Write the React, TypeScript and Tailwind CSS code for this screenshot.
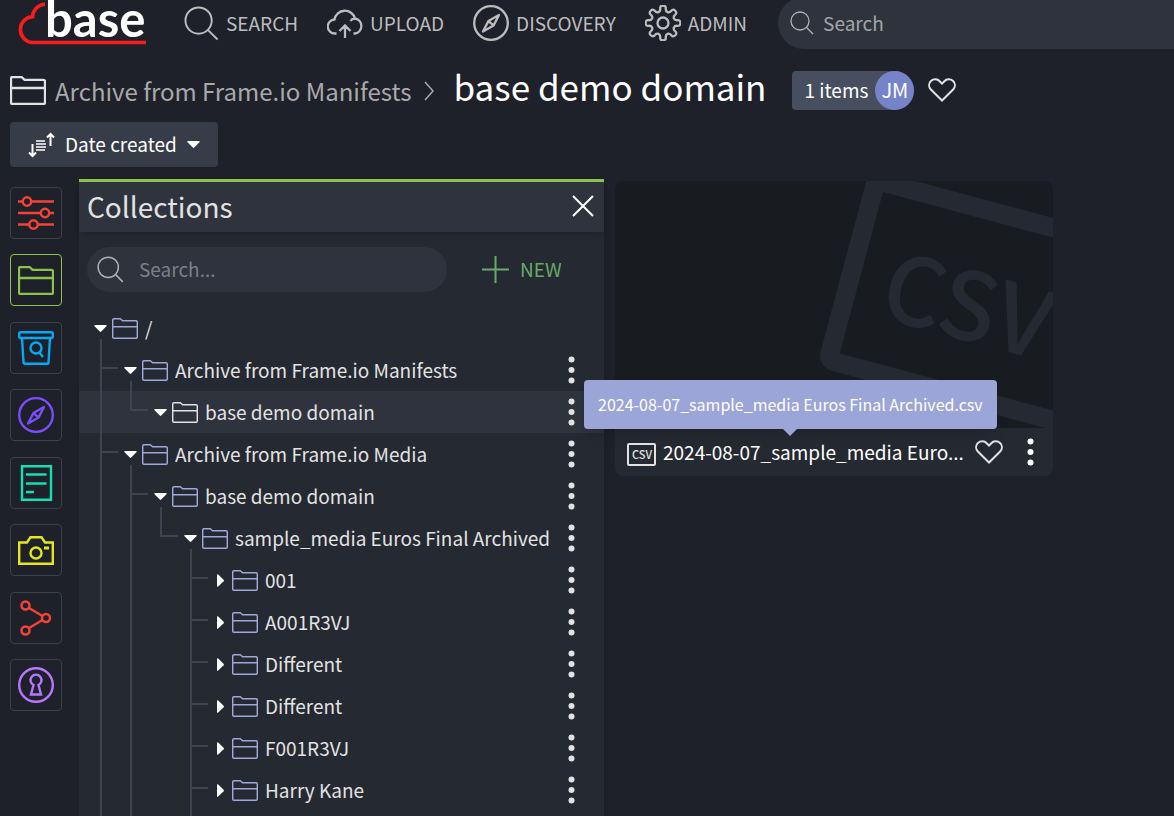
import { ReactElement, ReactNode, useState } from "react";

type Guide = "line" | "tee" | "elbow" | "blank";

interface TreeRow {
  name: string;
  guides: Guide[];
  open?: boolean;
  stub?: boolean;
  selected?: boolean;
  root?: boolean;
}

const rows: TreeRow[] = [
  { name: "/", guides: [], open: true, stub: true, root: true },
  {
    name: "Archive from Frame.io Manifests",
    guides: ["tee"],
    open: true,
    stub: true,
  },
  {
    name: "base demo domain",
    guides: ["line", "elbow"],
    open: true,
    selected: true,
  },
  {
    name: "Archive from Frame.io Media",
    guides: ["tee"],
    open: true,
    stub: true,
  },
  {
    name: "base demo domain",
    guides: ["line", "tee"],
    open: true,
    stub: true,
  },
  {
    name: "sample_media Euros Final Archived",
    guides: ["line", "line", "elbow"],
    open: true,
    stub: true,
  },
  { name: "001", guides: ["line", "line", "blank", "tee"] },
  { name: "A001R3VJ", guides: ["line", "line", "blank", "tee"] },
  { name: "Different", guides: ["line", "line", "blank", "tee"] },
  { name: "Different", guides: ["line", "line", "blank", "tee"] },
  { name: "F001R3VJ", guides: ["line", "line", "blank", "tee"] },
  { name: "Harry Kane", guides: ["line", "line", "blank", "tee"] },
];

const FILE_NAME = "2024-08-07_sample_media Euros Final Archived.csv";
const MAX_NAME = 28;

const shorten = (name: string): string =>
  name.length > MAX_NAME ? name.slice(0, MAX_NAME) + "..." : name;

// Eight rounded teeth, smoothed through the midpoints of the outline.
const gearPath = (): string => {
  const pts: [number, number][] = [];
  for (let i = 0; i < 8; i++) {
    const steps: [number, number][] = [
      [-10, 17.6],
      [10, 17.6],
      [12, 12],
      [33, 12],
    ];
    steps.forEach(([deg, r]) => {
      const a = ((i * 45 + deg) * Math.PI) / 180;
      pts.push([18 + r * Math.cos(a), 18 + r * Math.sin(a)]);
    });
  }
  const mid = (i: number) => {
    const [x1, y1] = pts[i % pts.length];
    const [x2, y2] = pts[(i + 1) % pts.length];
    return `${(x1 + x2) / 2} ${(y1 + y2) / 2}`;
  };
  let d = `M${mid(0)}`;
  for (let i = 1; i <= pts.length; i++) {
    const [x, y] = pts[i % pts.length];
    d += ` Q${x} ${y} ${mid(i)}`;
  }
  return d + "Z";
};

const Icon = (props: {
  box: string;
  className: string;
  width?: number;
  children: ReactNode;
}): ReactElement => (
  <svg
    viewBox={props.box}
    className={`shrink-0 ${props.className}`}
    fill="none"
    stroke="currentColor"
    strokeWidth={props.width ?? 2}
    aria-hidden="true"
  >
    {props.children}
  </svg>
);

const Folder = ({ className, width }: { className: string; width?: number }) => (
  <Icon box="0 0 36 29" className={className} width={width}>
    <path
      d="M1 2.6Q1 1 2.6 1H11.6L14.6 3.8H33.4Q35 3.8 35 5.4V26.4Q35 28 33.4 28H2.6Q1 28 1 26.4ZM1 12H35"
      strokeLinejoin="round"
    />
  </Icon>
);

const Magnifier = ({ className }: { className: string }) => (
  <Icon box="0 0 36 36" className={className}>
    <circle cx="15" cy="15" r="13.5" />
    <path d="M24.5 24.5L34.5 34.5" />
  </Icon>
);

const Compass = ({ className }: { className: string }) => (
  <Icon box="0 0 36 36" className={className} width={2.3}>
    <circle cx="18" cy="18" r="16.8" />
    <path
      d="M26 10L20.6 20.4L10 26.5L15.4 16.1ZM15.4 16.1L20.6 20.4"
      strokeLinejoin="round"
    />
  </Icon>
);

const Heart = () => (
  <Icon box="0 0 28 24" className="h-6 w-7">
    <path d="M14 22.5L2.9 11.5C.4 8.8.6 5.2 2.9 3 5.6.5 9.5.8 11.7 3.2L14 5.6 16.3 3.2C18.5.8 22.4.5 25.1 3 27.4 5.2 27.6 8.8 25.1 11.5Z" />
  </Icon>
);

const Dots = () => (
  <svg viewBox="0 0 8 28" className="h-7 w-2" fill="currentColor">
    <circle cx="4.5" cy="3.5" r="3" />
    <circle cx="4.5" cy="14" r="3" />
    <circle cx="4.5" cy="24.5" r="3" />
  </svg>
);

const CaretDown = () => (
  <svg viewBox="0 0 13 7" className="h-[7px] w-[13px] shrink-0" fill="white">
    <path d="M1 0H12Q13.5 0 12.4 1.2L7.2 6.6Q6.5 7.2 5.8 6.6L.6 1.2Q-.5 0 1 0Z" />
  </svg>
);

const CaretRight = () => (
  <svg viewBox="0 0 7 13" className="h-[13px] w-[7px] shrink-0" fill="white">
    <path d="M0 1V12Q0 13.5 1.2 12.4L6.6 7.2Q7.2 6.5 6.6 5.8L1.2.6Q0-.5 0 1Z" />
  </svg>
);

const Logo = () => (
  <svg
    viewBox="0 0 130 46"
    className="h-[46px] w-[130px]"
    role="img"
    aria-label="base"
  >
    <path
      d="M28 4.3A13 13 0 0 0 15.6 16.6A13 13 0 0 0 15 42.5H129"
      fill="none"
      stroke="#f81c1c"
      strokeWidth="3.6"
    />
    <text
      x="28"
      y="37"
      fill="white"
      className="font-[Lato,sans-serif] text-[49px] font-bold"
    >
      base
    </text>
  </svg>
);

const navItems = [
  { label: "SEARCH", icon: <Magnifier className="size-[35px]" /> },
  {
    label: "UPLOAD",
    icon: (
      <Icon box="0 0 36 30" className="h-[30px] w-9" width={2.3}>
        <path d="M9.5 25.5H8A7 7 0 0 1 7.5 11.5A10.5 10.5 0 0 1 28 10.5A7.6 7.6 0 0 1 28 25.5H26.5M28 10.5Q25 10.6 23.5 13M18 30V18M12.5 23L18 17.5L23.5 23" />
      </Icon>
    ),
  },
  { label: "DISCOVERY", icon: <Compass className="size-9" /> },
  {
    label: "ADMIN",
    icon: (
      <Icon box="0 0 36 36" className="size-9" width={2.3}>
        <path d={gearPath()} />
        <circle cx="18" cy="18" r="5.5" />
      </Icon>
    ),
  },
];

const tools = [
  {
    label: "Filters",
    color: "border-[#3b404e] text-[#f44336]",
    icon: (
      <Icon box="0 0 36 34" className="h-[34px] w-9" width={2.5}>
        <path d="M0 5.5H5M13 5.5H36M0 17H23M31 17H36M0 28.5H11M19 28.5H36" />
        <circle cx="9" cy="5.5" r="4.2" />
        <circle cx="27" cy="17" r="4.2" />
        <circle cx="15.5" cy="28.5" r="4.2" />
      </Icon>
    ),
  },
  {
    label: "Collections",
    color: "border-[#8bc34a] text-[#8bc34a]",
    icon: <Folder className="h-[29px] w-9" width={2.3} />,
  },
  {
    label: "Saved searches",
    color: "border-[#3b404e] text-[#03a9f4]",
    icon: (
      <Icon box="0 0 36 34" className="h-[34px] w-9" width={2.4}>
        <rect x="1.2" y="1.2" width="33.6" height="5.8" rx="1.5" />
        <path d="M4 7L5.5 31.3Q5.6 32.8 7 32.8H29Q30.4 32.8 30.5 31.3L32 7" />
        <circle cx="18" cy="17" r="5.5" />
        <path d="M21 21L25 26" />
      </Icon>
    ),
  },
  {
    label: "Discovery",
    color: "border-[#3b404e] text-[#7c4dff]",
    icon: <Compass className="size-9" />,
  },
  {
    label: "Notes",
    color: "border-[#3b404e] text-[#12dfb4]",
    icon: (
      <Icon box="0 0 36 36" className="size-9" width={2.4}>
        <path d="M4 1.2H33V34.8H4ZM8 9.5H28.5M8 18.5H28.5M8 27H16" />
      </Icon>
    ),
  },
  {
    label: "Snapshots",
    color: "border-[#3b404e] text-[#e6e61c]",
    icon: (
      <Icon box="0 0 36 29" className="h-[29px] w-9" width={2.4}>
        <path d="M1.2 6.5H9L12.5 1.2H23.5L27 6.5H34.8V27.8H1.2Z" />
        <circle cx="18" cy="17" r="5.5" />
        <path d="M26 12H31" strokeWidth="3" />
      </Icon>
    ),
  },
  {
    label: "Workflows",
    color: "border-[#3b404e] text-[#f44336]",
    icon: (
      <Icon box="0 0 36 36" className="size-9" width={2.5}>
        <circle cx="7.5" cy="5.5" r="4" />
        <circle cx="28" cy="18" r="4" />
        <circle cx="7.5" cy="30.5" r="4" />
        <path d="M11 8L24.5 16M11 28L24.5 20" />
      </Icon>
    ),
  },
  {
    label: "Permissions",
    color: "border-[#3b404e] text-[#b975ff]",
    icon: (
      <Icon box="0 0 36 36" className="size-9" width={2.4}>
        <circle cx="18" cy="18" r="16.8" />
        <path d="M15.5 18A5.5 5.5 0 1 1 20.5 18L23 27.5H13Z" />
      </Icon>
    ),
  },
];

const GuideCell = ({ kind }: { kind: Guide }) => (
  <div className="flex w-[30px] shrink-0 self-stretch pl-1.5">
    {kind !== "blank" && (
      <div
        className={`w-0.5 bg-[#3f4453] ${kind === "elbow" ? "h-5" : "h-full"}`}
      />
    )}
    {(kind === "tee" || kind === "elbow") && (
      <div className="mt-[18px] h-0.5 w-4 bg-[#3f4453]" />
    )}
  </div>
);

const TreeItem = ({ row }: { row: TreeRow }) => (
  <li
    className={`flex h-[42px] shrink-0 items-center pr-[29px] pl-[15px] ${
      row.selected ? "bg-[#2f333e]" : ""
    }`}
  >
    {row.guides.map((kind, i) => (
      <GuideCell key={i} kind={kind} />
    ))}
    <div className="mr-[5px] grid w-[13px] shrink-0 grid-rows-[1fr_auto_1fr] justify-items-center self-stretch">
      <span />
      {row.open ? <CaretDown /> : <CaretRight />}
      {row.stub && <span className="mt-[7px] w-0.5 bg-[#3f4453]" />}
    </div>
    <Folder
      className={`h-[21px] w-[26px] ${
        row.selected ? "text-[#e2e2e2]" : "text-[#9fa8da]"
      }`}
    />
    <span className="ml-[7px] flex-1 truncate text-[19px] leading-7">
      {row.name}
    </span>
    {!row.root && (
      <button type="button" aria-label={`Options for ${row.name}`}>
        <Dots />
      </button>
    )}
  </li>
);

const CollectionsPanel = () => {
  const [search, setSearch] = useState<string>("");
  return (
    <section className="flex w-[525px] shrink-0 flex-col border-t-[3px] border-[#8bc34a] bg-[#252931] shadow-md">
      <div className="flex h-[50px] shrink-0 items-center justify-between bg-[#2f333e] pr-2.5 pb-0.5 pl-2 shadow-md">
        <h2 className="text-[28px] leading-10">Collections</h2>
        <button type="button" aria-label="Close" className="text-white">
          <Icon box="0 0 22 22" className="size-[22px]">
            <path d="M1 1L21 21M21 1L1 21" />
          </Icon>
        </button>
      </div>
      <div className="mt-[15px] mb-[15px] flex items-center pl-2">
        <label className="flex h-[45px] w-[360px] items-center rounded-full bg-[#2f333e] pl-2.5 text-[#b0b0b2]">
          <Magnifier className="size-[27px]" />
          <input
            type="text"
            aria-label="Search collections"
            placeholder="Search..."
            value={search}
            onChange={(e) => setSearch(e.target.value)}
            className="ml-[15px] w-64 text-[19px] outline-none placeholder:text-[#7d7f86]"
          />
        </label>
        <button
          type="button"
          className="ml-[35px] flex items-center gap-[11px] text-[19px] text-[#66ab68]"
        >
          <Icon box="0 0 27 27" className="size-[27px]">
            <path d="M13.5 0V27M0 13.5H27" />
          </Icon>
          NEW
        </button>
      </div>
      <ul className="flex flex-col">
        {rows.map((row, i) => (
          <TreeItem key={i} row={row} />
        ))}
      </ul>
      <div className="flex flex-1 pl-[15px]">
        <GuideCell kind="line" />
        <GuideCell kind="line" />
        <GuideCell kind="blank" />
        <GuideCell kind="line" />
      </div>
    </section>
  );
};

const AssetCard = () => (
  <article className="w-[438px] rounded-lg bg-[#252931]">
    <svg
      viewBox="0 0 438 247"
      className="w-full rounded-t-lg bg-[#181b20]"
      aria-hidden="true"
    >
      <g transform="translate(268 11) rotate(15)">
        <rect
          x="-9.5"
          y="-9.5"
          width="250"
          height="186"
          rx="6"
          fill="none"
          stroke="#252931"
          strokeWidth="19"
        />
        <text x="26" y="122" fill="#252931" className="text-[94px] font-medium">
          CSV
        </text>
      </g>
    </svg>
    <div className="relative flex h-12 items-center pl-3">
      <svg
        viewBox="0 0 29 28"
        className="h-7 w-[29px] shrink-0"
        aria-hidden="true"
      >
        <rect
          x="1"
          y="6"
          width="27"
          height="21"
          rx="1"
          fill="none"
          stroke="#e2e2e2"
          strokeWidth="2"
        />
        <text x="5" y="21" fill="#e2e2e2" className="text-[11px] font-medium">
          CSV
        </text>
      </svg>
      <a
        href="#file"
        className="ml-[7px] w-[304px] text-[19px] leading-7 whitespace-nowrap text-white"
      >
        {shorten(FILE_NAME)}
      </a>
      <button type="button" aria-label="Add to favourites" className="ml-2">
        <Heart />
      </button>
      <button
        type="button"
        aria-label="File options"
        className="ml-[23px] text-white"
      >
        <Dots />
      </button>
      <div
        role="tooltip"
        className="absolute bottom-[47px] -left-[31px] z-10 flex flex-col items-center"
      >
        <div className="flex h-[49px] items-center rounded bg-[#9ca5d8] px-3.5 pb-0.5 text-[16px] whitespace-nowrap text-white shadow-lg">
          {FILE_NAME}
        </div>
        <svg
          viewBox="0 0 14 7"
          className="-mb-[7px] h-[7px] w-3.5"
          fill="#9ca5d8"
        >
          <path d="M0 0H14L7 7Z" />
        </svg>
      </div>
    </div>
  </article>
);

const App = (): ReactElement => {
  const [query, setQuery] = useState<string>("");

  return (
    <div className="flex h-screen flex-col overflow-hidden bg-[#1e2129] font-['Noto_Sans_CJK_JP',sans-serif] text-[#e2e2e2]">
      <header className="flex h-[46px] shrink-0 items-center pl-[17px]">
        <a href="#home" className="shrink-0">
          <Logo />
        </a>
        <nav className="ml-[37px] flex shrink-0 gap-[29px] text-[#bcbcbd]">
          {navItems.map((item) => (
            <a
              key={item.label}
              href={`#${item.label.toLowerCase()}`}
              className="flex items-center gap-[7px] text-[19px] leading-7"
            >
              {item.icon}
              {item.label}
            </a>
          ))}
        </nav>
        <label className="ml-[31px] flex h-[52px] flex-1 items-center rounded-l-full bg-[#2f333e] pl-3 text-[#b0b0b2]">
          <Magnifier className="size-6" />
          <input
            type="text"
            aria-label="Search"
            placeholder="Search"
            value={query}
            onChange={(e) => setQuery(e.target.value)}
            className="ml-[9px] min-w-0 flex-1 text-[19px] outline-none placeholder:text-[#a3a4a8]"
          />
        </label>
      </header>

      <div className="mt-[22px] flex h-11 shrink-0 items-center pl-2.5">
        <Folder className="h-[29px] w-9" width={2.3} />
        <div className="ml-[9px] flex items-baseline pb-1">
          <a href="#manifests" className="text-[24px] leading-10 text-[#a9a9ab]">
            Archive from Frame.io Manifests
          </a>
          <Icon
            box="0 0 10 20"
            className="ml-3 h-5 w-2.5 text-[#a9a9ab]"
            width={1.5}
          >
            <path d="M1 1L9 10L1 19" />
          </Icon>
          <h1 className="ml-5 text-[35px] leading-10 text-white">
            base demo domain
          </h1>
        </div>
        <div className="ml-[26px] flex h-[39px] items-center rounded-l rounded-r-[19px] bg-[#474e5f] pl-3 text-[19px] text-white">
          1 items
          <span className="ml-[7px] flex size-[39px] items-center justify-center rounded-full bg-[#7683c8] text-[20px]">
            JM
          </span>
        </div>
        <button type="button" aria-label="Favourite" className="ml-3.5">
          <Heart />
        </button>
      </div>

      <div className="mt-2.5 flex shrink-0 pl-2.5">
        <button
          type="button"
          className="flex h-[45px] items-center rounded-sm bg-[#373c49] pr-[18px] pl-[18px] text-[19px] text-white"
        >
          <Icon box="0 0 27 26" className="mr-2.5 h-[26px] w-[27px]">
            <path d="M4.5 12V24M1 20.5L4.5 24L8 20.5M22.5 14V2M19 5.5L22.5 2L26 5.5" />
            <path d="M8 9H17M8 12H18M8 15H18M8 18H17" strokeWidth="1.3" />
          </Icon>
          Date created
          <span className="ml-2.5">
            <CaretDown />
          </span>
        </button>
      </div>

      <main className="mt-3 flex min-h-0 flex-1">
        <aside className="mx-2.5 mt-2 flex h-[524px] shrink-0 flex-col justify-between">
          {tools.map((tool) => (
            <button
              key={tool.label}
              type="button"
              aria-label={tool.label}
              className={`flex size-[52px] items-center justify-center rounded border ${tool.color}`}
            >
              {tool.icon}
            </button>
          ))}
        </aside>
        <div className="ml-[7px] flex min-w-0 flex-1">
          <CollectionsPanel />
          <div className="ml-[11px] pt-0.5">
            <AssetCard />
          </div>
        </div>
      </main>
    </div>
  );
};

export default App;
